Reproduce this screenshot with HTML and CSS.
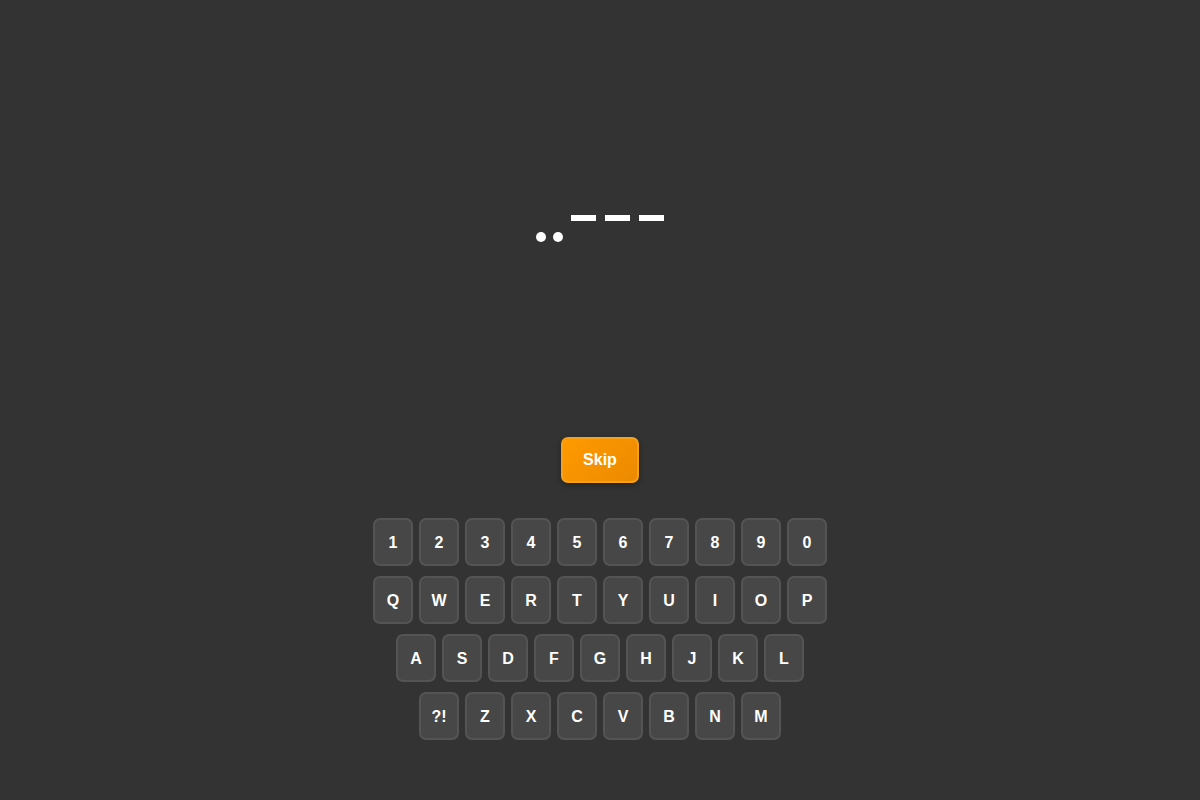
FILE: index.html
```html
<!DOCTYPE html>
<html>
<head>
<meta charset="utf-8">
<link rel="stylesheet" href="styles.css">
</head>
<body>
<main class="app">
  <div class="morse">
    <span class="dot"></span>
    <span class="dot"></span>
    <span class="dash"></span>
    <span class="dash"></span>
    <span class="dash"></span>
  </div>
  <button class="skip">Skip</button>
  <div class="keyboard">
    <div class="row">
      <button class="key">1</button><button class="key">2</button><button class="key">3</button><button class="key">4</button><button class="key">5</button><button class="key">6</button><button class="key">7</button><button class="key">8</button><button class="key">9</button><button class="key">0</button>
    </div>
    <div class="row">
      <button class="key">Q</button><button class="key">W</button><button class="key">E</button><button class="key">R</button><button class="key">T</button><button class="key">Y</button><button class="key">U</button><button class="key">I</button><button class="key">O</button><button class="key">P</button>
    </div>
    <div class="row">
      <button class="key">A</button><button class="key">S</button><button class="key">D</button><button class="key">F</button><button class="key">G</button><button class="key">H</button><button class="key">J</button><button class="key">K</button><button class="key">L</button>
    </div>
    <div class="row">
      <button class="key">?!</button><button class="key">Z</button><button class="key">X</button><button class="key">C</button><button class="key">V</button><button class="key">B</button><button class="key">N</button><button class="key">M</button>
    </div>
  </div>
</main>
</body>
</html>
```
FILE: styles.css
```css
html, body {
  margin: 0;
  padding: 0;
  background: #333333;
  font-family: "Liberation Sans", Arial, sans-serif;
  color: #ffffff;
}

.app {
  height: 800px;
  display: flex;
  flex-direction: column;
  align-items: center;
  padding-top: 212px;
  box-sizing: border-box;
}

.morse {
  display: flex;
  align-items: flex-start;
  height: 31px;
  margin-left: -1px;
}

.dot {
  width: 10px;
  height: 10px;
  border-radius: 50%;
  background: #ffffff;
  margin-top: 20px;
  margin-right: 7px;
}

.dash {
  width: 25px;
  height: 6px;
  background: #ffffff;
  margin-top: 3px;
  margin-right: 9px;
}

.dot + .dash {
  margin-left: 1px;
}

.dash:last-child {
  margin-right: 0;
}

.skip {
  margin-top: 194px;
  width: 78px;
  height: 46px;
  box-sizing: border-box;
  border: 2px solid #f7a11a;
  border-radius: 7px;
  background: linear-gradient(135deg, #ff9a00 0%, #ec8a00 100%);
  color: #ffffff;
  font-family: "Liberation Sans", Arial, sans-serif;
  font-weight: bold;
  font-size: 16px;
  padding: 0;
  box-shadow: 0 2px 6px rgba(0, 0, 0, 0.35);
}

.keyboard {
  margin-top: 35px;
  display: flex;
  flex-direction: column;
  align-items: center;
  gap: 10px;
}

.row {
  display: flex;
  gap: 6px;
}

.key {
  width: 40px;
  height: 48px;
  box-sizing: border-box;
  border: 2px solid #545454;
  border-radius: 7px;
  background: #474747;
  color: #ffffff;
  font-family: "Liberation Sans", Arial, sans-serif;
  font-weight: bold;
  font-size: 16px;
  padding: 2px 0 0 0;
}
```
